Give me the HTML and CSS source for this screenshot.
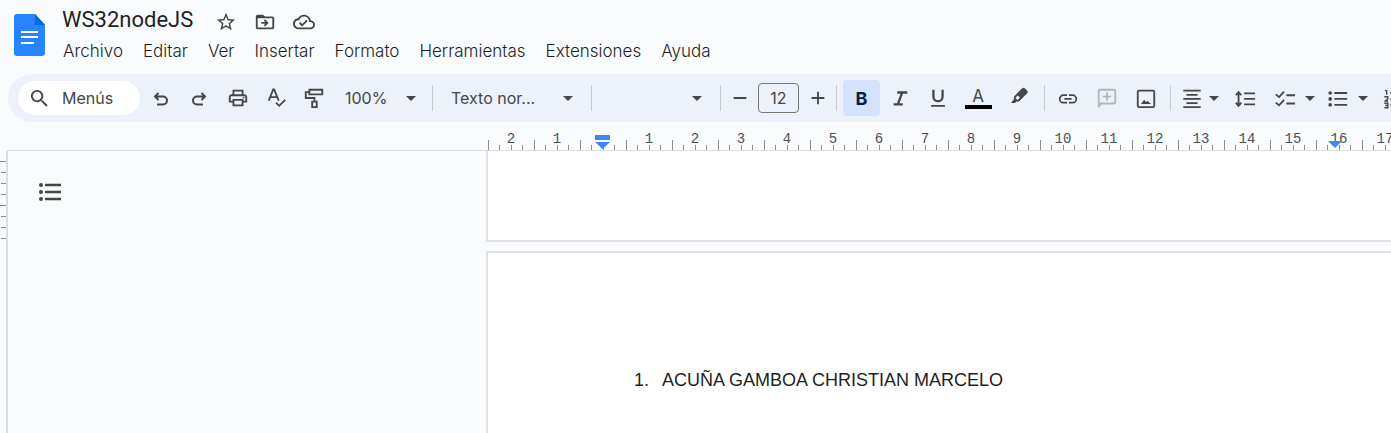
FILE: index.html
```html
<!DOCTYPE html>
<html lang="es">
<head>
<meta charset="utf-8">
<title>WS32nodeJS</title>
<link rel="stylesheet" href="styles.css">
</head>
<body>
<header class="header">
  <svg class="logo" viewBox="0 0 31 42" aria-hidden="true"><path fill="#2684fc" d="M3 0h18l10 11v28a3 3 0 0 1-3 3H3a3 3 0 0 1-3-3V3a3 3 0 0 1 3-3z"/><path fill="#0066da" d="M21 0l10 11H21z"/><path fill="#fff" d="M7 17h17v2H7zM7 22h17v2H7zM7 28h13v2H7z"/></svg>
  <div class="heading">
    <div class="title-row">
      <h1 class="title">WS32nodeJS</h1>
      <button class="title-button" aria-label="Destacar"><svg class="icon" viewBox="0 0 24 24"><path d="M22 9.24l-7.19-.62L12 2 9.19 8.63 2 9.24l5.46 4.73L5.82 21 12 17.27 18.18 21l-1.63-7.03zM12 15.4l-3.76 2.27 1-4.28-3.32-2.88 4.38-.38L12 6.1l1.71 4.04 4.38.38-3.32 2.88 1 4.28z"/></svg></button>
      <button class="title-button" aria-label="Mover"><svg class="icon" viewBox="0 0 24 24"><path d="M20 6h-8l-2-2H4c-1.100 0-2 .9-2 2v12c0 1.100.9 2 2 2h16c1.100 0 2-.9 2-2V8c0-1.100-.9-2-2-2zm0 12H4V8h16zm-8-1 4-4-4-4-1.400 1.400 1.600 1.600H8v2h4.200l-1.600 1.600z"/></svg></button>
      <button class="title-button" aria-label="Estado del documento"><svg class="icon" viewBox="0 0 24 24"><path d="M19.350 10.040C18.670 6.590 15.640 4 12 4 9.110 4 6.600 5.640 5.350 8.040 2.340 8.360 0 10.910 0 14c0 3.310 2.690 6 6 6h13c2.760 0 5-2.240 5-5 0-2.640-2.050-4.780-4.650-4.960zM19 18H6c-2.210 0-4-1.790-4-4s1.790-4 4-4h.71C7.370 7.690 9.480 6 12 6c3.040 0 5.500 2.460 5.500 5.500v.5H19c1.660 0 3 1.340 3 3s-1.340 3-3 3zm-9-3.820-2.090-2.090L6.500 13.500 10 17l6.010-6.010-1.410-1.410z"/></svg></button>
    </div>
    <nav class="menu">
      <button>Archivo</button><button>Editar</button><button>Ver</button><button>Insertar</button><button>Formato</button><button>Herramientas</button><button>Extensiones</button><button>Ayuda</button>
    </nav>
  </div>
</header>

<div class="toolbar" role="toolbar">
  <button class="search"><svg class="icon" viewBox="0 0 24 24"><path d="M15.500 14h-.79l-.28-.27A6.470 6.470 0 0 0 16 9.500 6.500 6.500 0 1 0 9.500 16c1.610 0 3.090-.59 4.230-1.570l.27.28v.79l5 4.990L20.490 19zm-6 0C7 14 5 12 5 9.500S7 5 9.500 5 14 7 14 9.500 12 14 9.500 14z"/></svg>Menús</button>
  <button class="tool" aria-label="Deshacer"><svg class="icon small" viewBox="0 0 18 18"><path class="line" d="M6.500 4 3 7.500 6.500 11M3.500 7.500H11a4 4 0 0 1 0 8H5"/></svg></button>
  <button class="tool" aria-label="Rehacer"><svg class="icon small" viewBox="0 0 18 18"><path class="line" d="M11.500 4 15 7.500 11.500 11M14.500 7.500H7a4 4 0 0 0 0 8h6"/></svg></button>
  <button class="tool print" aria-label="Imprimir"><svg class="icon" viewBox="0 0 24 24"><path d="M19 8h-1V3H6v5H5c-1.660 0-3 1.340-3 3v6h4v4h12v-4h4v-6c0-1.660-1.340-3-3-3zM8 5h8v3H8zm8 14H8v-4h8zm2-4v-2H6v2H4v-4c0-.55.45-1 1-1h14c.55 0 1 .45 1 1v4z"/><circle cx="18" cy="11.500" r="1"/></svg></button>
  <button class="tool" aria-label="Ortografía"><svg class="icon" viewBox="0 0 24 24"><path class="line" d="M4 15 9 2.500h1L15 15M6 11h7M12 17l3.500 3.500L22 14"/></svg></button>
  <button class="tool" aria-label="Copiar formato"><svg class="icon" viewBox="0 0 24 24"><path class="line" d="M7 3h14v5H7zM7 5.500H3V12h9.500v4M10 16h5v6h-5z"/></svg></button>
  <label class="dropdown zoom"><select aria-label="Zoom"><option>100%</option></select><svg viewBox="0 0 10 5"><path d="M0 0h10L5 5z"/></svg></label>
  <span class="separator"></span>
  <label class="dropdown style"><select aria-label="Estilos"><option>Texto nor...</option></select><svg viewBox="0 0 10 5"><path d="M0 0h10L5 5z"/></svg></label>
  <span class="separator"></span>
  <label class="dropdown font"><select aria-label="Fuente"><option></option></select><svg viewBox="0 0 10 5"><path d="M0 0h10L5 5z"/></svg></label>
  <span class="separator"></span>
  <button class="tool step" aria-label="Reducir"><svg class="icon" viewBox="0 0 22 22"><path class="line" d="M4 11h14"/></svg></button>
  <input class="size" value="12" aria-label="Tamaño de fuente">
  <button class="tool step" aria-label="Aumentar"><svg class="icon" viewBox="0 0 22 22"><path class="line" d="M4 11h14M11 4v14"/></svg></button>
  <span class="separator"></span>
  <button class="tool active" aria-label="Negrita"><b>B</b></button>
  <button class="tool" aria-label="Cursiva"><svg class="icon" viewBox="0 0 24 24"><path class="line thick" d="M9 6h11M5 19h10M14.500 6l-5 13"/></svg></button>
  <button class="tool" aria-label="Subrayado"><svg class="icon" viewBox="0 0 24 24"><path class="line thick" d="M7 3v7.500a5 5 0 0 0 10 0V3"/><path class="line" d="M4.500 20.500h15"/></svg></button>
  <button class="tool wide" aria-label="Color del texto"><span class="letter">A</span></button>
  <button class="tool wide" aria-label="Resaltar"><svg class="icon raised" viewBox="0 0 22 22"><path fill-rule="evenodd" d="M2 18 5 14c0-1-.5-2 .5-3L13 3.500c1-1 2-1 3 0L18 5.500c1 1 1 2 0 3L10.500 16c-1 1-2 .6-3 .6L6 18zM8.500 10.500 6.500 13 8.500 15 11 12.500z"/></svg></button>
  <span class="separator insert-start"></span>
  <button class="tool insert" aria-label="Insertar enlace"><svg class="icon" viewBox="0 0 24 24"><path d="M3.900 13c0-1.710 1.390-3.100 3.100-3.100h4V8H7a5 5 0 0 0 0 10h4v-1.900H7A3.100 3.100 0 0 1 3.900 13zM8 14h8v-2H8zm9-6h-4v1.900h4a3.100 3.100 0 0 1 0 6.200h-4V18h4a5 5 0 0 0 0-10z"/></svg></button>
  <button class="tool insert" disabled aria-label="Comentario"><svg class="icon" viewBox="0 0 24 24"><path class="line" d="M3 22V4q0-1 1-1h16q1 0 1 1v13q0 1-1 1H5zM12 6v9M7.500 10.500h9"/></svg></button>
  <button class="tool insert" aria-label="Insertar imagen"><svg class="icon" viewBox="0 0 24 24"><rect class="line" x="3" y="4" width="18" height="18" rx="1.500"/><path d="m6.500 18.500 3.500-4.500 2.200 2.600 1.300-1.600 4 3.500z"/></svg></button>
  <span class="separator image-end"></span>
  <button class="tool narrow" aria-label="Alinear"><svg class="icon" viewBox="0 0 24 24"><path class="line" d="M2.500 4h19M6 8.500h12M2.500 13h19M6 17.500h12M2.500 22h19"/></svg></button>
  <button class="arrow" aria-label="Opciones de alineación"><svg viewBox="0 0 10 5"><path d="M0 0h10L5 5z"/></svg></button>
  <button class="tool spacing" aria-label="Interlineado"><svg class="icon" viewBox="0 0 24 24"><path class="line" d="M5 6v14M2 9l3-3.500L8 9M2 17l3 3.500L8 17M11 7h12M11 13h12M11 19h12"/></svg></button>
  <button class="tool" aria-label="Lista de control"><svg class="icon" viewBox="0 0 24 24"><path class="line" d="m2 8 3.500 3L11 5M2 17l3.500 3L11 14M13.500 9H23M13.500 18H23"/></svg></button>
  <button class="arrow" aria-label="Opciones de lista de control"><svg viewBox="0 0 10 5"><path d="M0 0h10L5 5z"/></svg></button>
  <button class="tool" aria-label="Viñetas"><svg class="icon" viewBox="0 0 24 24"><path class="line" d="M8 6.500h14M8 13h14M8 19.500h14"/><circle cx="3.500" cy="6.500" r="2"/><circle cx="3.500" cy="13" r="2"/><circle cx="3.500" cy="19.500" r="2"/></svg></button>
  <button class="arrow" aria-label="Opciones de viñetas"><svg viewBox="0 0 10 5"><path d="M0 0h10L5 5z"/></svg></button>
  <button class="tool numbered" aria-label="Lista numerada"><svg class="icon" viewBox="0 0 24 24"><path class="line thin" d="M2 4h2v4.500M1.500 10.700h3.700v2.200L2.500 15.300h3M1.500 17.700h3.800v5H1.500M2.500 20.200h2.800"/><path class="line" d="M8 6.500h14M8 13h14M8 19.500h14"/></svg></button>
</div>

<div class="ruler">
  <span class="unit">2</span><span class="unit">1</span><span class="unit origin"><svg class="indent" viewBox="0 0 15 14"><path d="M0 0h15v5H0zM0 7h15L7.500 14z"/></svg></span><span class="unit">1</span><span class="unit">2</span><span class="unit">3</span><span class="unit">4</span><span class="unit">5</span><span class="unit">6</span><span class="unit">7</span><span class="unit">8</span><span class="unit">9</span><span class="unit">10</span><span class="unit">11</span><span class="unit">12</span><span class="unit">13</span><span class="unit">14</span><span class="unit">15</span><span class="unit">16<svg class="margin" viewBox="0 0 14 7"><path d="M0 0h14L7 7z"/></svg></span><span class="unit">17</span>
</div>

<main class="workspace">
  <div class="side-ruler"><i class="long"></i><i></i><i></i><i></i><i class="long"></i><i></i><i></i><i></i></div>
  <aside class="outline"><button class="outline-button" aria-label="Mostrar esquema"><svg viewBox="0 0 24 20"><path class="line thick" d="M7 3h16M7 10h16M7 17h16"/><circle cx="3" cy="3" r="2"/><circle cx="3" cy="10" r="2"/><circle cx="3" cy="17" r="2"/></svg></button></aside>
  <div class="pages">
    <section class="page previous"></section>
    <section class="page current">
      <ol class="names"><li>ACUÑA GAMBOA CHRISTIAN MARCELO</li></ol>
    </section>
  </div>
</main>
</body>
</html>
```

FILE: styles.css
```css
* { box-sizing: border-box; }
body {
  margin: 0;
  min-height: 100vh;
  display: flex;
  flex-direction: column;
  overflow: hidden;
  background: #f9fbfd;
  color: #1f1f1f;
  font-family: Inter, Roboto, sans-serif;
}
button, select, input { font: inherit; color: inherit; }
button { border: 0; padding: 0; background: none; }
svg { display: block; flex: none; fill: currentColor; }
.line { fill: none; stroke: currentColor; stroke-width: 2; }
.thick { stroke-width: 2.500; }
.thin { stroke-width: 1.500; }

.header { display: flex; gap: 17px; height: 74px; padding: 14px 14px 0; }
.logo { width: 31px; height: 42px; }
.heading { margin-top: -8px; }
.title-row { display: flex; align-items: center; height: 28px; color: #444746; }
.title { margin: 0 22px 0 0; font: 400 22px/28px Roboto, sans-serif; color: #1f1f1f; }
.title-button { margin-right: 17px; padding-top: 4px; }
.title-button .icon { width: 22px; height: 22px; }
.menu { display: flex; gap: 20px; padding: 6px 0 0 1px; }
.menu button { font-size: 17px; font-weight: 300; line-height: 22px; }

.toolbar {
  display: flex;
  flex: none;
  align-items: center;
  height: 48px;
  margin-left: 8px;
  padding-left: 10px;
  overflow: hidden;
  border-radius: 24px 0 0 24px;
  background: #edf2fa;
  color: #444746;
  font-size: 16px;
}
.search {
  display: flex;
  flex: none;
  align-items: center;
  gap: 11px;
  width: 122px;
  height: 34px;
  margin-right: 2px;
  padding-left: 10px;
  border-radius: 17px;
  background: #fff;
}
.icon { width: 22px; height: 22px; }
.search .icon { width: 23px; height: 23px; }
.small { width: 18px; height: 18px; }
.tool .icon { margin: auto; }
.tool { flex: none; width: 38px; height: 36px; border-radius: 4px; }
.print { margin-left: 1px; }
.tool:disabled { color: #b4b7ba; }
.separator { flex: none; width: 1px; height: 26px; background: #c7cacd; }
.dropdown { position: relative; flex: none; height: 34px; }
.dropdown select {
  width: 100%;
  height: 34px;
  padding: 0;
  border: 0;
  appearance: none;
  background: none;
}
.dropdown svg { position: absolute; top: 15px; right: 16px; width: 10px; height: 5px; pointer-events: none; }
.zoom { width: 87px; margin-left: 12px; }
.style { width: 140px; margin-left: 18px; }
.font { width: 128px; }
.style svg, .font svg { right: 18px; }
.step { width: 37px; }
.step .icon { width: 20px; height: 20px; }
.size {
  flex: none;
  width: 41px;
  height: 30px;
  padding: 0;
  border: 1px solid #747775;
  border-radius: 4px;
  background: none;
  text-align: center;
}
.active { width: 37px; margin: 0 1px 0 6px; background: #d3e3fd; color: #041e49; font-size: 18px; }
.wide { width: 42px; }
.letter { display: block; width: 27px; margin: auto; border-bottom: 4px solid #000; font-size: 17px; line-height: 18px; }
.raised { position: relative; top: -2px; }
.insert-start { margin-left: 3px; }
.insert { width: 39px; }
.insert-start + .insert { margin-left: 3px; }
.image-end { margin-left: 5px; }
.narrow { width: 32px; margin-left: 5px; }
.arrow { flex: none; width: 12px; }
.arrow svg { width: 10px; height: 5px; margin: auto; }
.spacing { margin: 0 2px 0 6px; }
.arrow + .tool:not(.spacing) { margin-left: 3px; }
.arrow + .numbered:not(.spacing) { margin-left: 6px; }

.ruler {
  display: flex;
  flex: none;
  height: 29px;
  margin-left: 7px;
  padding-left: 481px;
  border-bottom: 1px solid #dadce0;
}
.unit {
  position: relative;
  flex: none;
  width: 46px;
  height: 28px;
  padding-top: 8px;
  background:
    linear-gradient(#8b8e91, #8b8e91) 0 100% / 1px 10px no-repeat,
    linear-gradient(#8b8e91, #8b8e91) 11px 100% / 1px 5px no-repeat,
    linear-gradient(#8b8e91, #8b8e91) 23px 100% / 1px 5px no-repeat,
    linear-gradient(#8b8e91, #8b8e91) 34px 100% / 1px 5px no-repeat;
  color: #4d5054;
  font: 14px/18px "Liberation Mono", monospace;
  text-align: center;
}
.indent, .margin { position: absolute; fill: #4285f4; }
.indent { top: 13px; left: 15px; width: 15px; height: 14px; }
.margin { top: 19px; left: 12px; width: 14px; height: 7px; }

.workspace { display: flex; flex: 1; }
.side-ruler {
  display: flex;
  flex: none;
  flex-direction: column;
  align-items: flex-end;
  gap: 10px;
  width: 8px;
  padding-top: 10px;
  border-right: 2px solid #dadce0;
}
.side-ruler i { width: 5px; height: 1px; background: #8b8e91; }
.side-ruler .long { width: 6px; }
.outline { flex: none; width: 478px; padding: 31px 0 0 30px; color: #444746; }
.outline-button svg { width: 24px; height: 20px; }
.pages { display: flex; flex: 1; flex-direction: column; gap: 9px; }
.page { background: #fff; border: 2px solid #dfe1e4; border-right: 0; }
.previous { height: 91px; border-top: 0; }
.current { flex: 1; padding: 115px 0 0 146px; border-bottom: 0; }
.names { margin: 0; padding: 0; list-style: none; counter-reset: names; }
.names li {
  display: grid;
  grid-template-columns: 28px 1fr;
  counter-increment: names;
  font: 18px/24px "Liberation Sans", Arial, sans-serif;
}
.names li::before { content: counter(names) "."; }
```
